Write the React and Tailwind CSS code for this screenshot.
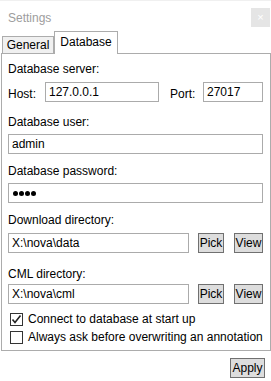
const font = { fontFamily: '"Liberation Sans", Arial, sans-serif' };

const Field = ({ value, className = "" }) => (
  <div
    className={`h-[20px] border border-[#ababab] bg-white pl-[3px] text-[12px] leading-[18px] text-black whitespace-nowrap overflow-hidden ${className}`}
  >
    {value}
  </div>
);

const Btn = ({ label, className = "" }) => (
  <div
    className={`h-[20px] border border-[#707070] bg-[#dddddd] text-[12px] leading-[18px] text-black flex items-center justify-center ${className}`}
  >
    {label}
  </div>
);

const Check = ({ checked, label }) => (
  <div className="flex items-center h-[18px]">
    <div className="w-[13px] h-[13px] ml-[2px] border border-[#333333] bg-white flex items-center justify-center">
      {checked && (
        <svg width="11" height="11" viewBox="0 0 11 11">
          <path d="M1.5 5.5 L4 8.5 L9.5 1.5" fill="none" stroke="#222" strokeWidth="1.6" />
        </svg>
      )}
    </div>
    <span className="ml-[5px] text-[12px] leading-[16px] text-black whitespace-nowrap">{label}</span>
  </div>
);

const Label = ({ children, className = "" }) => (
  <div className={`text-[12px] leading-[16px] text-black whitespace-nowrap ${className}`}>{children}</div>
);

export default function App() {
  return (
    <div style={font} className="w-[271px] h-[381px] bg-white border-t border-[#f0f0f0] overflow-hidden">
      {/* TITLE BAR */}
      <div className="flex justify-between items-start pl-[8px] pt-[7px] pr-[1px] h-[30px]">
        <span className="text-[12px] leading-[16px] text-[#9d9d9d] mt-[2px]">Settings</span>
        <div className="w-[19px] h-[19px] bg-[#e5e5e5] text-white text-[11px] leading-[19px] text-center">×</div>
      </div>

      {/* TABS */}
      <div className="flex items-end pl-[2px] h-[22px] relative z-10">
        <div className="w-[52px] h-[17px] border border-b-0 border-[#acacac] bg-[#f0f0f0] text-[12px] leading-[16px] text-black text-center">
          General
        </div>
        <div className="w-[64px] h-[23px] -mb-px border border-b-0 border-[#acacac] bg-white text-[12px] leading-[20px] text-black text-center">
          Database
        </div>
      </div>

      {/* PANEL */}
      <div className="ml-[1px] w-[270px] h-[298px] border border-[#acacac] pl-[6px] pr-[7px] pt-[7px]">
        <Label>Database server:</Label>
        <div className="flex items-end mt-[5px]">
          <Label className="w-[37px]">Host:</Label>
          <Field value="127.0.0.1" className="w-[114px]" />
          <Label className="ml-[11px] w-[33px]">Port:</Label>
          <Field value="27017" className="w-[60px]" />
        </div>

        <Label className="mt-[12px]">Database user:</Label>
        <Field value="admin" className="mt-[4px]" />

        <Label className="mt-[9px]">Database password:</Label>
        <div className="mt-[4px] h-[20px] border border-[#ababab] bg-white pl-[4px] flex items-center gap-[1px]">
          {[0, 1, 2, 3].map((i) => (
            <span key={i} className="w-[5px] h-[5px] rounded-full bg-black" />
          ))}
        </div>

        <Label className="mt-[9px]">Download directory:</Label>
        <div className="flex mt-[5px]">
          <Field value="X:\nova\data" className="w-[181px]" />
          <Btn label="Pick" className="ml-[9px] w-[26px]" />
          <Btn label="View" className="ml-[10px] w-[29px]" />
        </div>

        <Label className="mt-[13px]">CML directory:</Label>
        <div className="flex mt-[2px]">
          <Field value="X:\nova\cml" className="w-[181px]" />
          <Btn label="Pick" className="ml-[9px] w-[26px]" />
          <Btn label="View" className="ml-[10px] w-[29px]" />
        </div>

        <div className="mt-[6px] flex flex-col">
          <Check checked label="Connect to database at start up" />
          <Check label="Always ask before overwriting an annotation" />
        </div>
      </div>

      {/* FOOTER */}
      <div className="flex justify-end pr-[6px] pt-[7px]">
        <Btn label="Apply" className="w-[35px] h-[18px]" />
      </div>
    </div>
  );
}
